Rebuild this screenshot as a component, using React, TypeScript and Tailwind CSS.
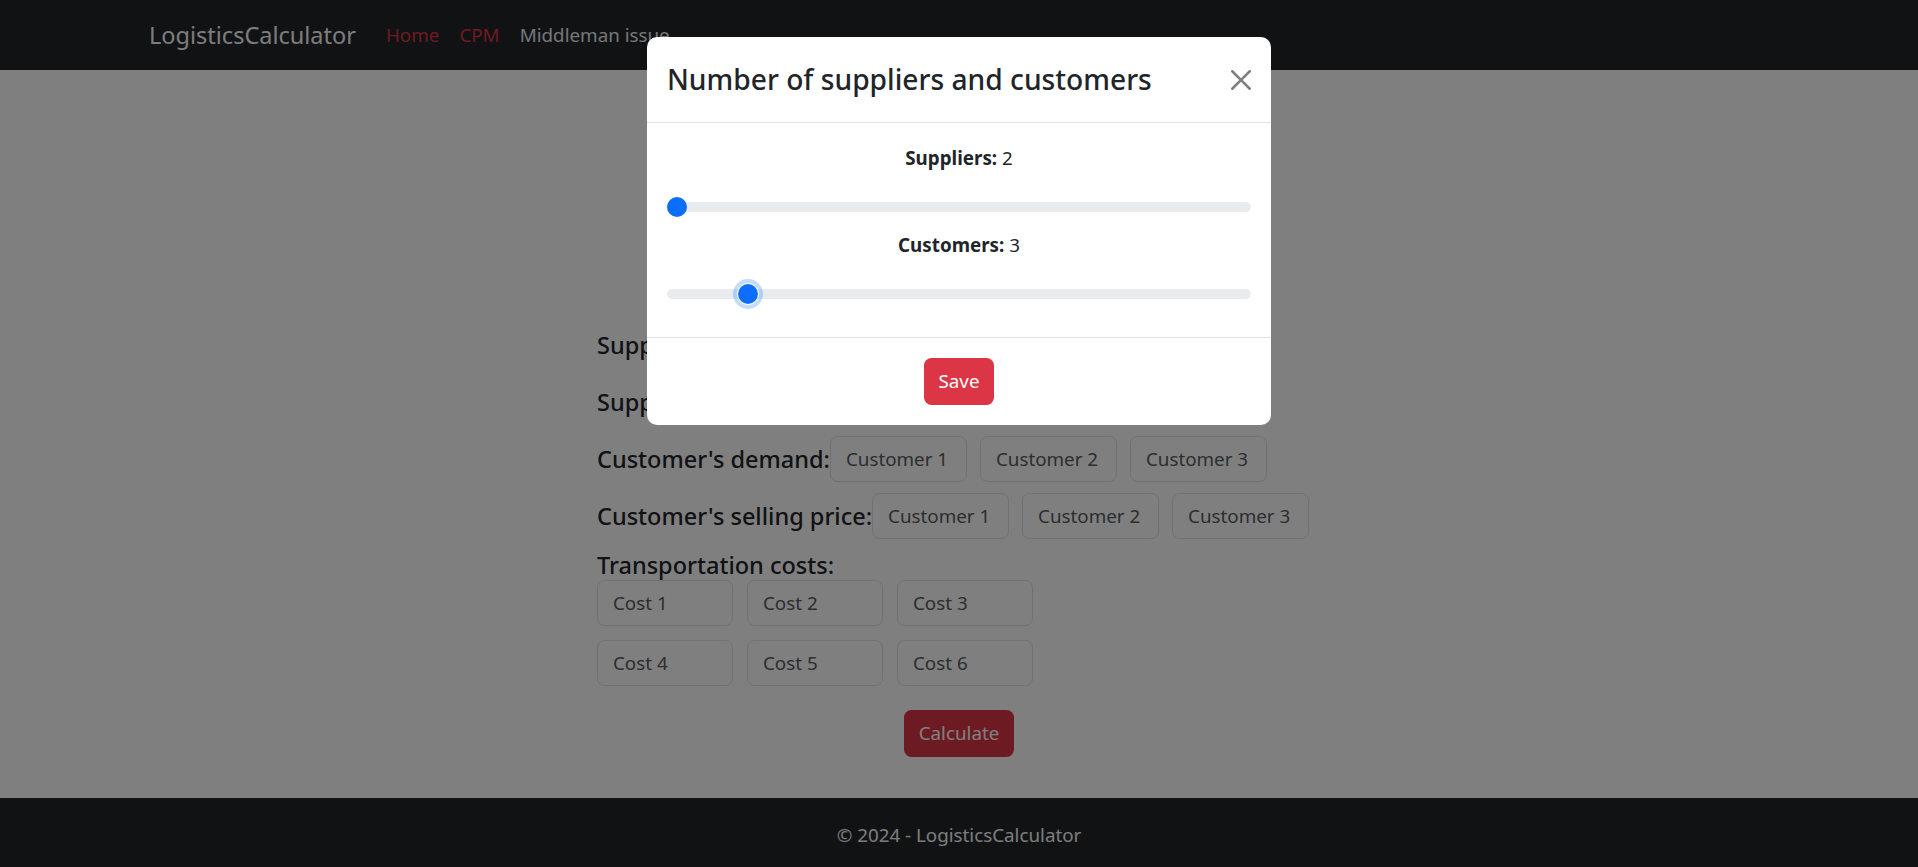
import React from 'react';

const customers = ['Customer 1', 'Customer 2', 'Customer 3'];
const suppliers = ['Supplier 1', 'Supplier 2'];

const inputCls =
  'h-[46px] rounded-[7.5px] border border-[#dee2e6] bg-white px-[15px] text-[18.8px] text-[#212529] placeholder:text-[#595c5f] outline-none';

const FormRow: React.FC<{ label: string; items: string[] }> = ({ label, items }) => (
  <div className="flex items-center mb-[11px]">
    <label className="shrink-0 whitespace-nowrap text-[23.5px] font-medium leading-[30px] text-[#212529]">{label}</label>
    <div className="flex gap-[13px]">
      {items.map(p => (
        <input key={p} placeholder={p} className={`w-[137px] ${inputCls}`} />
      ))}
    </div>
  </div>
);

// min 2, max 10 like the original range inputs
const RangeField: React.FC<{ label: string; value: number; focused?: boolean }> = ({ label, value, focused }) => {
  const pct = (value - 2) / 8;
  return (
    <div className="mb-[8px]">
      <div className="text-[18.8px] leading-[30px] text-[#212529]">
        <strong className="font-bold">{label}:</strong> {value}
      </div>
      <div className="relative mt-[19px] h-[30px] flex items-center">
        <div className="h-[10px] w-full rounded-full bg-[#e9ecef]" />
        <div
          className={`absolute top-[5px] h-[20px] w-[20px] rounded-full bg-[#0d6efd] ${
            focused ? 'shadow-[0_0_0_1px_#fff,0_0_0_5px_rgba(13,110,253,0.25)]' : ''
          }`}
          style={{ left: `calc(${pct} * (100% - 20px))` }}
        />
      </div>
    </div>
  );
};

export default function App() {
  return (
    <div className="relative min-h-screen flex flex-col bg-white font-['Segoe_UI','Noto_Sans',sans-serif]">
      <header className="h-[70px] bg-[#212529]">
        <div className="w-[1650px] mx-auto px-[15px] h-full flex items-center">
          <a className="text-[23.5px] text-[#f8f9fa] mr-[20px] leading-[38px]">LogisticsCalculator</a>
          <nav className="flex text-[18.8px] leading-[30px]">
            <a className="px-[10px] text-[#dc3545]">Home</a>
            <a className="px-[10px] text-[#dc3545]">CPM</a>
            <a className="px-[10px] text-[#e9ecef]">Middleman issue</a>
          </nav>
        </div>
      </header>

      <main className="flex-1 pt-[252px]">
        <div className="w-[724px] mx-auto">
          <FormRow label="Supplier's supply:" items={suppliers} />
          <FormRow label="Supplier's purchase price:" items={suppliers} />
          <FormRow label="Customer's demand:" items={customers} />
          <FormRow label="Customer's selling price:" items={customers} />

          <div className="mt-[2px] text-[23.5px] font-medium leading-[30px] text-[#212529]">Transportation costs:</div>
          <div className="grid grid-cols-[repeat(3,136px)] gap-x-[14px] gap-y-[14px]">
            {[1, 2, 3, 4, 5, 6].map(n => (
              <input key={n} placeholder={`Cost ${n}`} className={inputCls} />
            ))}
          </div>

          <div className="flex justify-center mt-[24px]">
            <button className="h-[47px] px-[15px] rounded-[7.5px] bg-[#dc3545] text-white text-[18.8px]">Calculate</button>
          </div>
        </div>
      </main>

      <footer className="h-[69px] bg-[#212529] flex items-center justify-center pt-[6px]">
        <span className="text-[18.8px] text-[#f8f9fa]">© 2024 - LogisticsCalculator</span>
      </footer>

      {/* modal backdrop */}
      <div className="fixed inset-0 bg-black/50" />

      <div className="fixed inset-x-0 top-[37px] flex justify-center">
        <div className="w-[624px] rounded-[10px] bg-white">
          <div className="flex items-center justify-between px-[20px] py-[20px] border-b border-[#dee2e6]">
            <h4 className="text-[28.2px] font-medium leading-[45px] text-[#212529]">Number of suppliers and customers</h4>
            <button className="w-[20px] h-[20px] opacity-50">
              <svg viewBox="0 0 16 16" width="20" height="20" fill="#000">
                <path d="M.293.293a1 1 0 0 1 1.414 0L8 6.586 14.293.293a1 1 0 1 1 1.414 1.414L9.414 8l6.293 6.293a1 1 0 0 1-1.414 1.414L8 9.414l-6.293 6.293a1 1 0 0 1-1.414-1.414L6.586 8 .293 1.707a1 1 0 0 1 0-1.414" />
              </svg>
            </button>
          </div>
          <div className="p-[20px] text-center">
            <RangeField label="Suppliers" value={2} />
            <RangeField label="Customers" value={3} focused />
          </div>
          <div className="flex justify-center border-t border-[#dee2e6] p-[20px]">
            <button className="h-[47px] px-[15px] rounded-[7.5px] bg-[#dc3545] text-white text-[18.8px]">Save</button>
          </div>
        </div>
      </div>
    </div>
  );
}
